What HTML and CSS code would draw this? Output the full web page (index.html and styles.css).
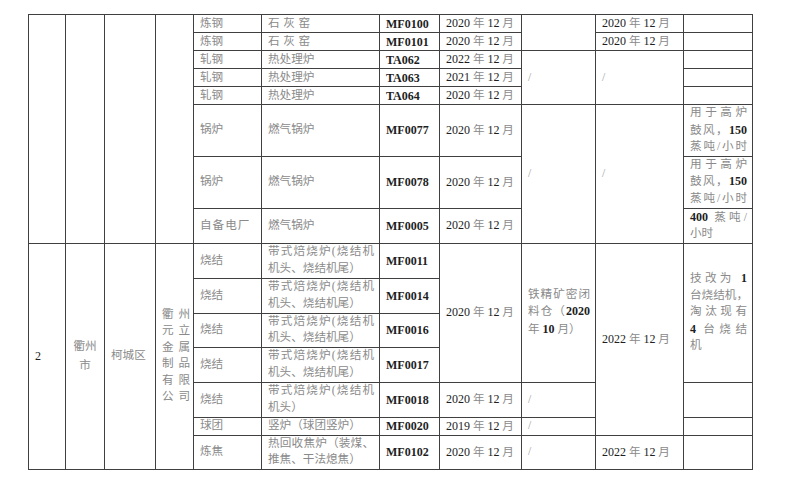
FILE: index.html
```html
<!DOCTYPE html>
<html lang="zh-CN">
<head>
<meta charset="utf-8">
<title>表</title>
<link rel="stylesheet" href="styles.css">
</head>
<body>
<div class="sheet">
<table class="grid">
<colgroup>
<col class="w37"><col class="w39"><col class="w51"><col class="w38"><col class="w68"><col class="w118"><col class="w60"><col class="w82"><col class="w74"><col class="w88"><col class="w69">
</colgroup>
<tbody>
<tr class="h18">
<td rowspan="8"></td><td rowspan="8"></td><td rowspan="8"></td><td rowspan="8"></td>
<td>炼钢</td><td class="sp">石灰窑</td><td class="code">MF0100</td><td><span class="n">2020</span> 年 <span class="n">12</span> 月</td><td rowspan="2"></td><td><span class="n">2020</span> 年 <span class="n">12</span> 月</td><td></td>
</tr>
<tr class="h18">
<td>炼钢</td><td class="sp">石灰窑</td><td class="code">MF0101</td><td><span class="n">2020</span> 年 <span class="n">12</span> 月</td><td><span class="n">2020</span> 年 <span class="n">12</span> 月</td><td></td>
</tr>
<tr class="h18">
<td>轧钢</td><td>热处理炉</td><td class="code">TA062</td><td><span class="n">2022</span> 年 <span class="n">12</span> 月</td><td rowspan="3" class="sl">/</td><td rowspan="3" class="sl">/</td><td></td>
</tr>
<tr class="h18">
<td>轧钢</td><td>热处理炉</td><td class="code">TA063</td><td><span class="n">2021</span> 年 <span class="n">12</span> 月</td><td></td>
</tr>
<tr class="h18">
<td>轧钢</td><td>热处理炉</td><td class="code">TA064</td><td><span class="n">2020</span> 年 <span class="n">12</span> 月</td><td></td>
</tr>
<tr class="h51">
<td>锅炉</td><td>燃气锅炉</td><td class="code">MF0077</td><td><span class="n">2020</span> 年 <span class="n">12</span> 月</td><td rowspan="3" class="sl">/</td><td rowspan="3" class="sl">/</td>
<td class="note"><span class="j">用于高炉</span><span class="j">鼓风，<span class="n b">150</span></span><span class="j">蒸吨/小时</span></td>
</tr>
<tr class="h52">
<td>锅炉</td><td>燃气锅炉</td><td class="code">MF0078</td><td><span class="n">2020</span> 年 <span class="n">12</span> 月</td>
<td class="note"><span class="j">用于高炉</span><span class="j">鼓风，<span class="n b">150</span></span><span class="j">蒸吨/小时</span></td>
</tr>
<tr class="h34">
<td class="sp1">自备电厂</td><td>燃气锅炉</td><td class="code">MF0005</td><td><span class="n">2020</span> 年 <span class="n">12</span> 月</td>
<td class="note"><span class="j"><span class="n b">400</span> 蒸吨/</span><span class="l">小时</span></td>
</tr>
<tr class="h35">
<td rowspan="7" class="num"><span class="n">2</span></td>
<td rowspan="7" class="city"><span class="l">衢州</span><span class="l">市</span></td>
<td rowspan="7" class="dist">柯城区</td>
<td rowspan="7" class="comp"><span class="j">衢州</span><span class="j">元立</span><span class="j">金属</span><span class="j">制品</span><span class="j">有限</span><span class="j">公司</span></td>
<td>烧结</td><td class="two"><span class="j">带式焙烧炉(烧结机</span><span class="l">机头、烧结机尾）</span></td><td class="code">MF0011</td>
<td rowspan="4"><span class="n">2020</span> 年 <span class="n">12</span> 月</td>
<td rowspan="4" class="note"><span class="j">铁精矿密闭</span><span class="j">料仓（<span class="n b">2020</span></span><span class="l">年 <span class="n b">10</span> 月）</span></td>
<td rowspan="6"><span class="n">2022</span> 年 <span class="n">12</span> 月</td>
<td rowspan="4" class="note"><span class="j">技改为 <span class="n b">1</span></span><span class="j">台烧结机，</span><span class="j">淘汰现有</span><span class="j"><span class="n b">4</span> 台烧结</span><span class="l">机</span></td>
</tr>
<tr class="h35">
<td>烧结</td><td class="two"><span class="j">带式焙烧炉(烧结机</span><span class="l">机头、烧结机尾）</span></td><td class="code">MF0014</td>
</tr>
<tr class="h34">
<td>烧结</td><td class="two"><span class="j">带式焙烧炉(烧结机</span><span class="l">机头、烧结机尾）</span></td><td class="code">MF0016</td>
</tr>
<tr class="h35">
<td>烧结</td><td class="two"><span class="j">带式焙烧炉(烧结机</span><span class="l">机头、烧结机尾）</span></td><td class="code">MF0017</td>
</tr>
<tr class="h35">
<td>烧结</td><td class="two"><span class="j">带式焙烧炉(烧结机</span><span class="l">机头）</span></td><td class="code">MF0018</td>
<td><span class="n">2020</span> 年 <span class="n">12</span> 月</td><td class="sl">/</td><td></td>
</tr>
<tr class="h18">
<td>球团</td><td>竖炉（球团竖炉）</td><td class="code">MF0020</td>
<td><span class="n">2019</span> 年 <span class="n">12</span> 月</td><td class="sl">/</td><td></td>
</tr>
<tr class="h34">
<td>炼焦</td><td class="two"><span class="j">热回收焦炉（装煤、</span><span class="l">推焦、干法熄焦）</span></td><td class="code">MF0102</td>
<td><span class="n">2020</span> 年 <span class="n">12</span> 月</td><td class="sl">/</td><td><span class="n">2022</span> 年 <span class="n">12</span> 月</td><td></td>
</tr>
</tbody>
</table>
</div>
</body>
</html>
```

FILE: styles.css
```css
html, body {
  margin: 0;
  padding: 0;
  background: #ffffff;
}

.sheet {
  padding: 14px 0 0 28px;
}

.grid {
  border-collapse: collapse;
  table-layout: fixed;
  width: 725px;
  font-family: "Liberation Serif", "Noto Sans CJK SC", serif;
  font-size: 11.6px;
  color: #8a8a8a;
}

.grid td {
  border: 1px solid #404040;
  padding: 0 5px 0 6px;
  line-height: 16px;
  vertical-align: middle;
  text-align: left;
  white-space: nowrap;
  overflow: hidden;
}

.w37 { width: 37px; }
.w39 { width: 39px; }
.w51 { width: 51px; }
.w38 { width: 38px; }
.w68 { width: 68px; }
.w118 { width: 118px; }
.w60 { width: 60px; }
.w82 { width: 82px; }
.w74 { width: 74px; }
.w88 { width: 88px; }
.w69 { width: 69px; }

.h18 { height: 18px; }
.h34 { height: 34px; }
.h35 { height: 35px; }
.h51 { height: 51px; }
.h52 { height: 52px; }

.n {
  font-family: "Liberation Serif", serif;
  font-size: 12px;
  color: #1e1e1e;
}

.b {
  font-weight: bold;
}

.grid td.code {
  font-family: "Liberation Serif", serif;
  font-size: 12px;
  font-weight: bold;
  color: #1e1e1e;
}

.grid td.sp {
  letter-spacing: 3.6px;
}

.grid td.sp1 {
  letter-spacing: 1px;
}

.grid td.sl {
  color: #a0a0a0;
}

.grid td.note {
  line-height: 16.5px;
}

.grid td.two {
  line-height: 16.5px;
}

.j {
  display: block;
  text-align: justify;
  text-align-last: justify;
}

.l {
  display: block;
}

.grid td.num {
  font-size: 13px;
}

.grid td.city {
  text-align: center;
  line-height: 19px;
  padding: 0 4px;
}

.grid td.dist {
  padding: 0 6px;
}

.grid td.comp {
  line-height: 16.5px;
  padding: 0 3px 0 6px;
}
```
